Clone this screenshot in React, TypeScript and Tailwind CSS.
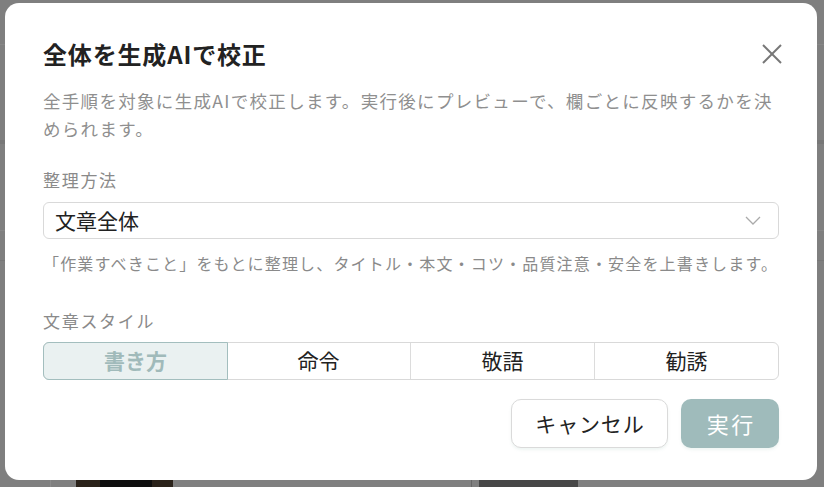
import React from "react";

const font = { fontFamily: '"Noto Sans CJK JP", "Noto Sans", sans-serif' };

export default function App() {
  const styles = ["書き方", "命令", "敬語", "勧誘"];
  return (
    <div className="relative h-[487px] w-full overflow-hidden bg-[#7f7f7f]" style={font}>
      {/* underlying page, dimmed */}
      <div className="flex h-full flex-col">
        <div className="h-[45px] border-b border-[#878787]" />
        <div className="h-[95px]" />
        <div className="h-[4px] bg-[#777777]" />
        <div className="h-[87px] border-b border-[#878787]" />
        <div className="h-[30px] border-b border-[#777777]" />
        <div className="flex-1" />
        <div className="flex h-[7px] items-stretch">
          <div className="w-[50px]" />
          <div className="flex w-[26px] border-l border-[#8a8a8a]" />
          <div className="flex w-[97px] bg-[#2a221a]">
            <div className="ml-[24px] w-[52px] bg-[#0e0e0e]" />
          </div>
          <div className="w-[298px]" />
          <div className="w-[8px] border-l border-[#666]" />
          <div className="w-[99px] bg-[#474747]" />
          <div className="flex-1" />
        </div>
      </div>

      {/* dialog */}
      <div className="absolute left-[5px] top-[3px] w-[812px] rounded-[14px] bg-white px-[38px] pb-[32px] pt-[35px]">
        <div className="flex items-center justify-between">
          <h2 className="text-[24px] font-bold leading-[32px] tracking-[0.035em] text-[#222]">全体を生成AIで校正</h2>
          <svg width="22" height="22" viewBox="0 0 22 22" className="-mr-[4px]" fill="none" stroke="#777" strokeWidth="2">
            <line x1="2" y1="2" x2="20" y2="20" />
            <line x1="20" y1="2" x2="2" y2="20" />
          </svg>
        </div>
        <p className="mt-[17px] text-[17.5px] leading-[28px] tracking-[0.075em] text-[#8f8f8f]">
          全手順を対象に生成AIで校正します。実行後にプレビューで、欄ごとに反映するかを決められます。
        </p>

        <div className="mt-[23px] text-[17px] leading-[28px] tracking-[0.1em] text-[#8a8a8a]">整理方法</div>
        <div className="mt-[8px] flex h-[37px] items-center justify-between rounded-[6px] border border-[#d9d9d9] pl-[11px] pr-[17px]">
          <span className="text-[21px] text-[#222]">文章全体</span>
          <svg width="16" height="9" viewBox="0 0 16 9" fill="none" stroke="#aaa" strokeWidth="1.3">
            <polyline points="1,1 8,8 15,1" />
          </svg>
        </div>
        <p className="mt-[10px] text-[16px] leading-[28px] tracking-[0.073em] text-[#8a8a8a]">
          「作業すべきこと」をもとに整理し、タイトル・本文・コツ・品質注意・安全を上書きします。
        </p>

        <div className="mt-[30px] text-[17px] leading-[28px] tracking-[0.1em] text-[#8a8a8a]">文章スタイル</div>
        <div className="mt-[7px] flex h-[38px] rounded-[6px] border border-[#d9d9d9]">
          {styles.map((s, i) =>
            i === 0 ? (
              <div
                key={s}
                className="-m-px flex flex-1 items-center justify-center rounded-l-[6px] border border-[#a3bebe] bg-[#eaf1f1] text-[21px] font-bold text-[#a0baba]"
              >
                {s}
              </div>
            ) : (
              <div
                key={s}
                className={`flex flex-1 items-center justify-center text-[21px] text-[#222] ${i > 1 ? "border-l border-[#dcdcdc]" : ""}`}
              >
                {s}
              </div>
            )
          )}
        </div>

        <div className="mt-[19px] flex justify-end gap-[13px]">
          <button className="h-[49px] w-[157px] rounded-[10px] border border-[#dadada] bg-white pl-[0.04em] text-[21px] tracking-[0.04em] text-[#222] shadow-[0_2px_3px_rgba(120,170,160,0.12)]">
            キャンセル
          </button>
          <button className="h-[49px] w-[98px] rounded-[10px] bg-[#9fbbbb] pl-[0.12em] text-[22px] tracking-[0.12em] text-white shadow-[0_2px_3px_rgba(120,170,160,0.12)]">
            実行
          </button>
        </div>
      </div>
    </div>
  );
}
